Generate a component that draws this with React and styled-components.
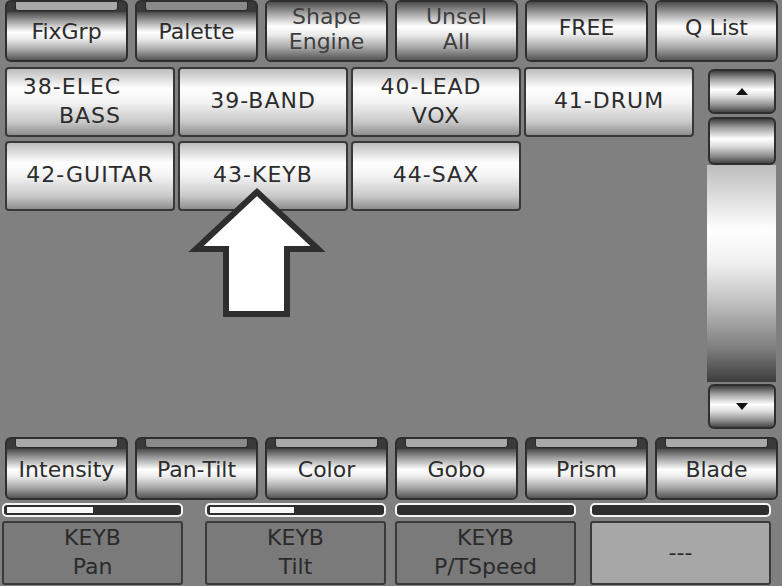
import React from 'react';
import styled, { createGlobalStyle } from 'styled-components';

const GlobalStyle = createGlobalStyle`
  html, body { margin: 0; padding: 0; background: #808080; }
  * { box-sizing: border-box; }
`;

const Page = styled.div`
  position: relative;
  width: 782px;
  height: 586px;
  overflow: hidden;
  background: #808080;
  font-family: "DejaVu Sans", "Liberation Sans", sans-serif;
  color: #2c2c2c;
  display: flex;
  flex-direction: column;
`;

const TabRow = styled.div`
  display: grid;
  grid-template-columns: repeat(6, 123px);
  column-gap: 7px;
  height: ${p => p.$h}px;
  margin-top: ${p => p.$top}px;
  padding-left: 5px;
`;

const Tab = styled.div`
  display: flex;
  flex-direction: column;
  border: 2px solid #2e2e2e;
  border-radius: 6px;
  background: #3a3a3a;
  overflow: hidden;
`;

const Indicator = styled.div`
  height: 9px;
  margin: 0 8px 1px;
  background: ${p => p.$tone};
  border: 1px solid #2a2a2a;
  border-top: none;
  border-radius: 0 0 3px 3px;
`;

const TabFace = styled.div`
  flex: 1;
  display: flex;
  flex-direction: column;
  align-items: center;
  justify-content: center;
  padding-bottom: ${p => p.$lift}px;
  font-size: 22px;
  line-height: ${p => (p.$two ? 25 : 26)}px;
  text-align: center;
  color: ${p => (p.$dim ? '#3e3e3e' : '#2c2c2c')};
  background: linear-gradient(
    to bottom,
    #4a4a4a 0%,
    #9c9c9c 18%,
    #ffffff 42%,
    #ececec 56%,
    #a9a9a9 78%,
    #555555 100%
  );
`;

const Middle = styled.div`
  display: flex;
  height: 365px;
  margin-top: 5px;
  padding-left: 5px;
`;

const Grid = styled.div`
  display: grid;
  grid-template-columns: repeat(4, 170px);
  grid-auto-rows: 70px;
  column-gap: 3px;
  row-gap: 4px;
  align-content: start;
`;

const Cell = styled.div`
  display: flex;
  flex-direction: column;
  align-items: center;
  justify-content: center;
  padding-bottom: 3px;
  border: 2px solid #383838;
  border-radius: 4px;
  font-size: 22px;
  line-height: 29px;
  letter-spacing: 1px;
  background: linear-gradient(
    to bottom,
    #bdbdbd 0%,
    #ffffff 30%,
    #f3f3f3 50%,
    #c9c9c9 80%,
    #8e8e8e 100%
  );
`;

const Line = styled.span`
  display: block;
  padding-right: ${p => p.$pad || 0}px;
`;

const Scroll = styled.div`
  display: flex;
  flex-direction: column;
  width: 68px;
  height: 360px;
  margin: 2px 6px 0 auto;
`;

const ScrollKnob = styled.div`
  display: flex;
  align-items: center;
  justify-content: center;
  height: ${p => p.$h}px;
  margin-top: ${p => p.$gap || 0}px;
  border: 2px solid #2e2e2e;
  border-radius: 6px;
  background: linear-gradient(
    to bottom,
    #3e3e3e 0%,
    #a0a0a0 20%,
    #ffffff 45%,
    #dcdcdc 62%,
    #8a8a8a 85%,
    #454545 100%
  );
`;

const Track = styled.div`
  flex: 1;
  margin-left: -1px;
  background: linear-gradient(
    to bottom,
    #bdbdbd 0%,
    #ffffff 30%,
    #f0f0f0 45%,
    #c4c4c4 62%,
    #7c7c7c 85%,
    #3c3c3c 100%
  );
`;

const EncoderRow = styled.div`
  display: flex;
  margin-top: 3px;
`;

const Encoder = styled.div`
  display: flex;
  flex-direction: column;
  width: 181px;
  margin-left: ${p => p.$left}px;
`;

const Bar = styled.div`
  height: 14px;
  border: 2px solid #f4f4f4;
  border-radius: 5px;
  background: #2e2e2e;
  padding: 2px 3px;
`;

const Fill = styled.div`
  height: 100%;
  background: #f8f8f8;
`;

const Box = styled.div`
  display: flex;
  flex-direction: column;
  align-items: center;
  justify-content: center;
  height: 64px;
  margin-top: 4px;
  padding-bottom: 2px;
  border: 2px solid #3a3a3a;
  border-radius: 3px;
  background: ${p => (p.$empty ? '#a7a7a7' : '#7a7a7a')};
  font-size: 22px;
  line-height: 29px;
  color: #2a2a2a;
`;

const Pointer = styled.svg`
  position: absolute;
  left: 185px;
  top: 184px;
`;

const topTabs = [
  { label: ['FixGrp'], tone: '#a9a9a9' },
  { label: ['Palette'], tone: '#8a8a8a' },
  { label: ['Shape', 'Engine'], dim: true },
  { label: ['Unsel', 'All'], dim: true },
  { label: ['FREE'] },
  { label: ['Q List'] },
];

const groups = [
  [['38-ELEC', 36], ['BASS', 0]],
  [['39-BAND', 0]],
  [['40-LEAD', 10], ['VOX', 0]],
  [['41-DRUM', 0]],
  [['42-GUITAR', 0]],
  [['43-KEYB', 0]],
  [['44-SAX', 0]],
];

const bottomTabs = [
  { label: 'Intensity', tone: '#a9a9a9' },
  { label: 'Pan-Tilt', tone: '#8a8a8a' },
  { label: 'Color', tone: '#a9a9a9' },
  { label: 'Gobo', tone: '#a9a9a9' },
  { label: 'Prism', tone: '#a9a9a9' },
  { label: 'Blade', tone: '#a9a9a9' },
];

const encoders = [
  { left: 2, fill: 50, lines: ['KEYB', 'Pan'] },
  { left: 22, fill: 49, lines: ['KEYB', 'Tilt'] },
  { left: 9, fill: 0, lines: ['KEYB', 'P/TSpeed'] },
  { left: 14, fill: 0, lines: ['---'], empty: true },
];

const Tri = ({ down }) => (
  <svg width="12" height="7" viewBox="0 0 12 7">
    <polygon points={down ? '0,0 12,0 6,7' : '0,7 12,7 6,0'} fill="#111" />
  </svg>
);

export default function App() {
  return (
    <Page>
      <GlobalStyle />
      <TabRow $h={62} $top={0}>
        {topTabs.map((t, i) => (
          <Tab key={i}>
            {t.tone && <Indicator $tone={t.tone} />}
            <TabFace
              $two={t.label.length > 1}
              $dim={t.dim}
              $lift={t.tone ? 8 : t.label.length > 1 ? 4 : 6}
            >
              {t.label.map(l => <span key={l}>{l}</span>)}
            </TabFace>
          </Tab>
        ))}
      </TabRow>

      <Middle>
        <Grid>
          {groups.map((g, i) => (
            <Cell key={i}>
              {g.map(([text, pad]) => (
                <Line key={text} $pad={pad}>{text}</Line>
              ))}
            </Cell>
          ))}
        </Grid>
        <Scroll>
          <ScrollKnob $h={45}><Tri /></ScrollKnob>
          <ScrollKnob $h={48} $gap={3} />
          <Track />
          <ScrollKnob $h={45} $gap={2}><Tri down /></ScrollKnob>
        </Scroll>
      </Middle>

      <TabRow $h={63} $top={5}>
        {bottomTabs.map(t => (
          <Tab key={t.label}>
            <Indicator $tone={t.tone} />
            <TabFace $lift={7}>{t.label}</TabFace>
          </Tab>
        ))}
      </TabRow>

      <EncoderRow>
        {encoders.map((e, i) => (
          <Encoder key={i} $left={e.left}>
            <Bar><Fill style={{ width: `${e.fill}%` }} /></Bar>
            <Box $empty={e.empty}>
              {e.lines.map(l => <span key={l}>{l}</span>)}
            </Box>
          </Encoder>
        ))}
      </EncoderRow>

      <Pointer width="146" height="136" viewBox="0 0 146 136">
        <polygon
          points="72,8 133,65 102,65 102,130 41,130 41,65 11,65"
          fill="#ffffff"
          stroke="#2e2e2e"
          strokeWidth="6"
          strokeLinejoin="miter"
        />
      </Pointer>
    </Page>
  );
}
